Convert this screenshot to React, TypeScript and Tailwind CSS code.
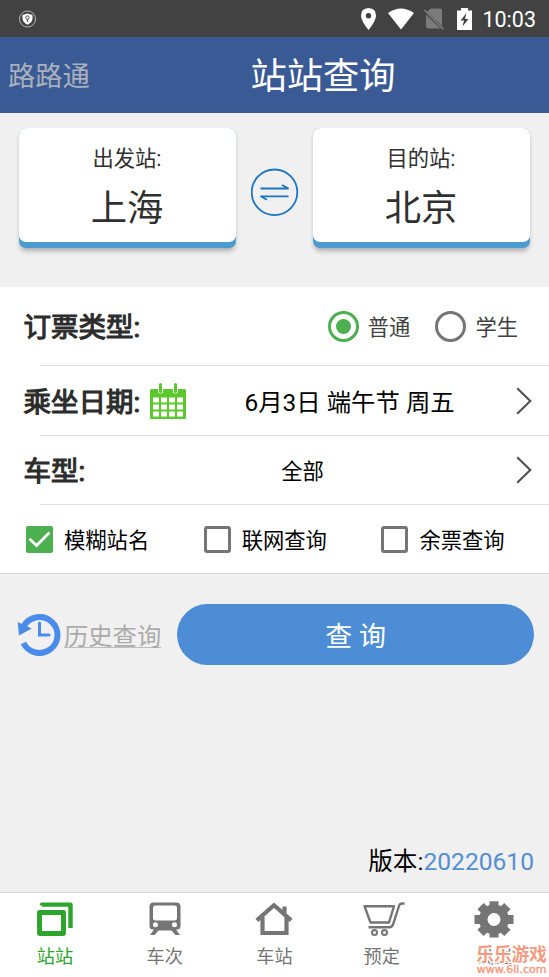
import type { ReactNode } from 'react'

const tabs = [
  { id: 'station', label: '站站', icon: <StationIcon />, active: true },
  { id: 'train', label: '车次', icon: <TrainIcon /> },
  { id: 'depot', label: '车站', icon: <HouseIcon /> },
  { id: 'booking', label: '预定', icon: <CartIcon /> },
  { id: 'settings', label: '设置', icon: <GearIcon /> },
]

function StationIcon() {
  return (
    <svg width="36" height="34" viewBox="0 0 36 34" fill="none" stroke="currentColor" strokeLinejoin="round">
      <path d="M5 3.500V2.600H33.500V26" strokeWidth="4.400" />
      <rect x="2.500" y="10.500" width="24" height="21" strokeWidth="4.900" />
    </svg>
  )
}

function TrainIcon() {
  return (
    <svg width="32" height="34" viewBox="0 0 32 34" fill="currentColor">
      <path
        fillRule="evenodd"
        d="M4.500 0.500H27.500Q31.500 0.500 31.500 4.500V24Q31.500 27.500 28 27.500H27L31 33H26.500L22.500 28.500H9.500L5.500 33H1L5 27.500H4Q.5 27.500 .5 24V4.500Q.5 0.500 4.500 0.500ZM6.500 3.500Q4 3.500 4 6V16Q4 18.500 6.500 18.500H25.500Q28 18.500 28 16V6Q28 3.500 25.500 3.500ZM6.500 20.200A2.500 2.500 0 1 0 6.500 25.200A2.500 2.500 0 1 0 6.500 20.200ZM25.500 20.200A2.500 2.500 0 1 0 25.500 25.200A2.500 2.500 0 1 0 25.500 20.200Z"
      />
    </svg>
  )
}

function HouseIcon() {
  return (
    <svg width="38" height="34" viewBox="0 0 38 34" fill="none" stroke="currentColor" strokeWidth="4.200">
      <path d="M1.800 18.400L19 3.200L36.200 18.400" />
      <path d="M7.500 15V31H31.500V15" />
      <path d="M29.500 4.500V11" />
    </svg>
  )
}

function CartIcon() {
  return (
    <svg width="42" height="35" viewBox="0 0 42 35" fill="none" stroke="currentColor" strokeWidth="2.400">
      <path d="M1.500 4.200H31L26 20.500H7.500Z" strokeLinejoin="round" />
      <path d="M41.500 1.500H39Q36.800 1.500 36 4L30 22.500Q29 25.200 26.500 25.200H5.500" />
      <circle cx="11.500" cy="30.600" r="2.500" strokeWidth="2" />
      <circle cx="21.500" cy="30.600" r="2.500" strokeWidth="2" />
    </svg>
  )
}

function GearIcon() {
  return (
    <svg width="40" height="37" viewBox="-20 -18.5 40 37" fill="currentColor">
      <rect x="-4.500" y="-18.200" width="9" height="9" />
      <rect x="-4.500" y="9" width="9" height="9" />
      <rect x="-19.500" y="-4.500" width="10" height="9" />
      <rect x="9.500" y="-4.500" width="10" height="9" />
      <g transform="rotate(45)">
        <rect x="-4.500" y="-19" width="9" height="9" />
        <rect x="-4.500" y="10" width="9" height="9" />
        <rect x="-19" y="-4.500" width="9" height="9" />
        <rect x="10" y="-4.500" width="9" height="9" />
      </g>
      <path fillRule="evenodd" d="M0-15A15 15 0 1 1 0 15A15 15 0 1 1 0-15ZM0-6.500A6.500 6.500 0 1 0 0 6.500A6.500 6.500 0 1 0 0-6.500Z" />
    </svg>
  )
}

function StatusBar() {
  return (
    <div className="flex h-[37px] items-center bg-[#424242] pl-[19px] pr-[13px] text-white">
      <svg width="17" height="18" viewBox="0 0 17 18">
        <circle cx="8.500" cy="9" r="8" fill="none" stroke="#c4c4c4" strokeWidth=".9" />
        <path d="M8.500 3.500L13.500 5V9Q13 12.500 8.500 14.800Q4 12.500 3.500 9V5Z" fill="#fff" />
        <circle cx="8.500" cy="7.600" r="1.700" fill="none" stroke="#555" />
        <path d="M8.500 9V12" stroke="#555" strokeWidth="1.200" />
      </svg>
      <div className="ml-auto flex items-center">
        <svg width="15" height="22" viewBox="0 0 15 22">
          <path fillRule="evenodd" fill="#fff" d="M7.500 0Q15 .4 15 7.700Q15 12.500 7.500 22Q0 12.500 0 7.700Q0 .4 7.500 0ZM7.500 5A2.700 2.700 0 1 0 7.500 10.400A2.700 2.700 0 1 0 7.500 5Z" />
        </svg>
        <svg className="ml-3" width="26" height="22" viewBox="0 0 26 22">
          <path d="M0 5Q13-4 26 5L13 21.500Z" fill="#fff" />
        </svg>
        <svg className="ml-2.5" width="20" height="22" viewBox="0 0 20 22">
          <path d="M7 .5H16Q18 .5 18 2.500V18L3 3.500ZM2 6.500L16.500 20.500H4Q2 20.500 2 18.500Z" fill="#7b7b7b" />
          <path d="M.5 2L19.500 21.500" stroke="#7b7b7b" strokeWidth="1.600" />
        </svg>
        <svg className="ml-[13px]" width="15" height="22" viewBox="0 0 15 22">
          <path fillRule="evenodd" fill="#fff" d="M4 0H11V2.500H15V22H0V2.500H4ZM9.500 5L3.500 12.500H7L5.500 18.500L11.500 11H8Z" />
        </svg>
        <span className="ml-2.5 pt-0.5 text-[21.500px] leading-6">10:03</span>
      </div>
    </div>
  )
}

function StationCard({ title, name }: { title: string; name: string }) {
  return (
    <div className="h-[120px] w-[217px] rounded-[7px] bg-[#4c9bd0] shadow-[0_4px_5px_-1px_rgba(0,0,0,0.28)]">
      <div className="flex h-[114px] flex-col items-center rounded-[7px] bg-white pr-px text-[#303030]">
        <span className="mt-4 text-[21.300px] leading-[30px]">{title}</span>
        <span className="mt-[10px] text-[36.300px] leading-[50px]">{name}</span>
      </div>
    </div>
  )
}

function SwapIcon() {
  return (
    <svg width="48" height="48" viewBox="0 0 48 48" fill="none" stroke="#1b75bf" strokeWidth="1.800">
      <circle cx="23.500" cy="24.300" r="22.800" />
      <path d="M9.500 20.500H37.500L31 17M37.500 28.300H9.500L16 31.800" />
    </svg>
  )
}

function CalendarIcon() {
  return (
    <svg className="ml-[9px]" width="38" height="36" viewBox="0 0 38 36">
      <rect x="1" y="6" width="36" height="30" rx="1.500" fill="#5bc92b" />
      <g stroke="#fff" strokeWidth="5" strokeLinecap="round">
        <path d="M11.500 2V8M26.500 2V8" />
      </g>
      <path d="M11.500 1.500V8.500M26.500 1.500V8.500" stroke="#5bc92b" strokeWidth="3" strokeLinecap="round" />
      <g fill="#fff">
        {[14.5, 21.5, 28.5].map((y) =>
          [4, 12, 20, 28].map((x) => <rect key={`${x}-${y}`} x={x} y={y} width="6" height="5" />)
        )}
      </g>
    </svg>
  )
}

function Chevron() {
  return (
    <svg className="mr-[17px]" width="16" height="28" viewBox="0 0 16 28" fill="none" stroke="#505050" strokeWidth="2.100">
      <path d="M1.200 1.200L14.300 14L1.200 26.800" />
    </svg>
  )
}

function Radio({ label, checked }: { label: string; checked?: boolean }) {
  return (
    <label className="flex items-center">
      {checked ? (
        <span className="flex size-[31px] items-center justify-center rounded-full border-3 border-[#4caf50]">
          <span className="size-[15px] rounded-full bg-[#4caf50]" />
        </span>
      ) : (
        <span className="size-[31px] rounded-full border-3 border-[#757575]" />
      )}
      <span className="ml-[9px] pt-[3px] text-[21.300px] leading-[30px] text-[#424242]">{label}</span>
    </label>
  )
}

function Checkbox({ label, checked }: { label: string; checked?: boolean }) {
  return (
    <label className="flex w-[177.700px] shrink-0 items-center">
      {checked ? (
        <span className="size-[27px] rounded-[2px] bg-[#4caf50]">
          <svg width="27" height="27" viewBox="0 0 27 27" fill="none" stroke="#fff" strokeWidth="2.800">
            <path d="M3.500 12.800L10.500 19.500L23.500 6.500" />
          </svg>
        </span>
      ) : (
        <span className="size-[27px] rounded-[3px] border-3 border-[#757575]" />
      )}
      <span className="ml-[11px] pt-[3px] text-[21.300px] leading-[30px] text-black">{label}</span>
    </label>
  )
}

function RowTitle({ children }: { children: ReactNode }) {
  return (
    <span className="pt-1 text-[27.500px] leading-10 text-[#2c2c2c] [-webkit-text-stroke:1.1px_#2c2c2c]">
      {children}
    </span>
  )
}

export default function App() {
  return (
    <div className="flex h-[977px] w-[549px] flex-col overflow-hidden bg-[#f0f0f0] font-['Roboto','Noto_Sans_CJK_SC',sans-serif]" lang="zh-CN">
      <StatusBar />

      {/* Header */}
      <header className="grid h-[76px] grid-cols-[97px_1fr_0px] items-center bg-[#395a94]">
        <span className="pl-2 pt-1 text-[27.300px] leading-10 text-[#aab0bd]">路路通</span>
        <h1 className="pt-1 text-center text-[36.300px] leading-[50px] text-white">站站查询</h1>
      </header>

      {/* Stations */}
      <div className="flex h-[174px] justify-between px-[19px] pt-[15px]">
        <StationCard title="出发站:" name="上海" />
        <div className="pt-10">
          <SwapIcon />
        </div>
        <StationCard title="目的站:" name="北京" />
      </div>

      {/* Search form */}
      <section className="border-b border-[#d6d6d6] bg-white">
        <div className="flex h-[78px] items-center pl-[23.500px] pr-[31px]">
          <RowTitle>订票类型:</RowTitle>
          <div className="ml-auto flex gap-[25px]">
            <Radio label="普通" checked />
            <Radio label="学生" />
          </div>
        </div>
        <div className="ml-10 border-t border-[#dedede]" />
        <div className="flex h-[69px] items-center pl-[23.500px]">
          <RowTitle>乘坐日期:</RowTitle>
          <CalendarIcon />
          <span className="flex-1 pr-[4px] pt-1 text-center text-[24.400px] leading-9">6月3日 端午节 周五</span>
          <Chevron />
        </div>
        <div className="ml-10 border-t border-[#dedede]" />
        <div className="flex h-[68px] items-center pl-[23.500px]">
          <RowTitle>车型:</RowTitle>
          <span className="flex-1 pl-[4px] pt-[3px] text-center text-[21.300px] leading-[30px]">全部</span>
          <Chevron />
        </div>
        <div className="ml-10 border-t border-[#dedede]" />
        <div className="flex h-[68px] items-center pl-[26px]">
          <Checkbox label="模糊站名" checked />
          <Checkbox label="联网查询" />
          <Checkbox label="余票查询" />
        </div>
      </section>

      {/* Actions */}
      <div className="mt-[30px] flex items-center">
        <svg className="ml-[17px]" width="44" height="44" viewBox="0 0 44 44" fill="none" stroke="#4a8bec">
          <path d="M6.900 13A18 18 0 1 1 6.400 30" strokeWidth="6" />
          <path d="M.7 9L14.700 15.500L2 22.500Z" fill="#4a8bec" stroke="none" />
          <path d="M22.500 10V22H32" strokeWidth="3" strokeLinecap="round" />
        </svg>
        <a className="ml-[3px] h-[27px] border-b border-[#bdbdbd] text-[24.300px] leading-8 text-[#aaa]">历史查询</a>
        <button className="ml-4 h-[61px] w-[357px] rounded-full bg-[#4c8dd6] pt-[5px] text-[27px] text-white">查 询</button>
      </div>

      <p className="mb-3 mr-[15px] mt-auto text-right text-[24.600px] leading-9">
        版本:<span className="text-[#548fd3]">20220610</span>
      </p>

      {/* Bottom tabs */}
      <nav className="relative grid h-[85px] shrink-0 grid-cols-5 border-t border-[#d6d6d6] bg-white">
        {tabs.map((tab) => (
          <div key={tab.id} className={tab.active ? 'flex flex-col items-center text-[#2ba52b]' : 'flex flex-col items-center text-[#757575]'}>
            <div className="flex h-[52px] items-center">{tab.icon}</div>
            <span className={tab.id === 'booking' ? 'pr-[5px] text-[18.200px] leading-6' : 'text-[18.200px] leading-6'}>{tab.label}</span>
          </div>
        ))}
        <div className="absolute bottom-[2px] right-[2px] flex flex-col items-center text-[#f59a80]">
          <span className="text-[17.700px] font-bold leading-5 [paint-order:stroke] [-webkit-text-stroke:3px_#fff]">乐乐游戏</span>
          <span className="font-['DejaVu_Sans'] text-[11px] leading-[10px] [-webkit-text-stroke:0.4px_#f59a80]">www.6ll.com</span>
        </div>
      </nav>
    </div>
  )
}
